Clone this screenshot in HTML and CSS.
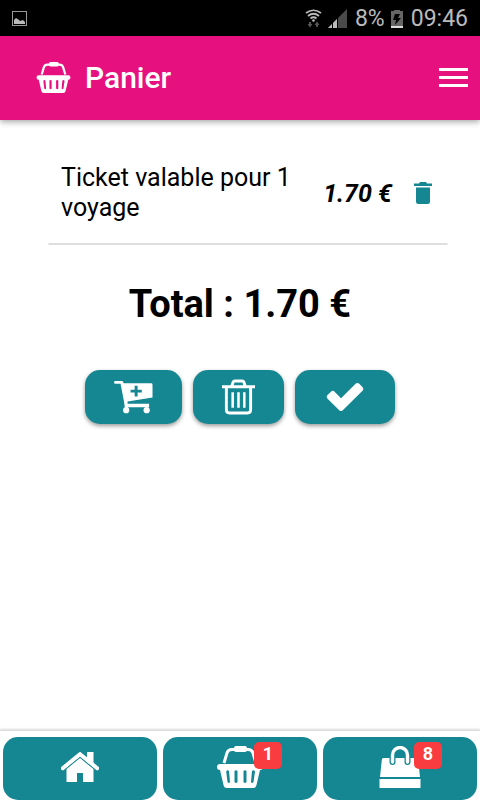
FILE: index.html
```html
<!DOCTYPE html>
<html lang="fr">
  <head>
    <meta charset="UTF-8" />
    <meta name="viewport" content="width=device-width, initial-scale=1.0" />
    <title>Panier</title>
    <link rel="stylesheet" href="styles.css">
  </head>
  <body>
    <svg class="defs" aria-hidden="true">
      <symbol id="basket" viewBox="0 0 46 42">
        <path d="M7 17 L10 7 Q11 3.500 15 3.500 H31 Q35 3.500 36 7 L39 17" fill="none" stroke="currentColor" stroke-width="3" />
        <rect x="17" y="0" width="13" height="6" rx="2" fill="currentColor" />
        <path fill="currentColor" fill-rule="evenodd" d="M3 18 H43 A3 3 0 0 1 43 24 L39.500 39 Q39 42 36 42 H10 Q7 42 6.500 39 L3 24 A3 3 0 0 1 3 18 Z M9.200 25.500 L10.500 36 Q12 38 13 36 L12 25 Q10.500 23.500 9.200 25.500 Z M17.500 25 V36 Q19 38 20.500 36 V25 Q19 23.500 17.500 25 Z M26.500 25 V36 Q28 38 29.500 36 V25 Q28 23.500 26.500 25 Z M35 25 L34 36 Q35 38 36.500 36 L38 25.500 Q36.500 23.500 35 25 Z" />
      </symbol>
    </svg>

    <div class="status-bar">
      <svg class="picture" width="15" height="15" viewBox="0 0 15 15">
        <rect x="0.500" y="0.500" width="14" height="14" fill="none" stroke="#999" />
        <path d="M2 13 V9 L4 7 L7 9 L8 10 L11 9 L13 11 V13 Z" fill="#bbb" />
      </svg>
      <svg width="17" height="20" viewBox="0 0 17 20">
        <g fill="none" stroke="#bbb" stroke-width="1.700">
          <path d="M1 4 Q8.500 -1.500 16 4" />
          <path d="M3 7 Q8.500 2.500 14 7" />
          <path d="M5.500 9.500 Q8.500 7 11.500 9.500" />
        </g>
        <circle cx="8.500" cy="11.500" r="1.300" fill="#bbb" />
        <path d="M5 13 V17 M12 18 V14" stroke="#555" stroke-width="2" />
        <path d="M2.500 15 H7.500 L5 18.500 Z M9.500 16 H14.500 L12 12.500 Z" fill="#555" />
      </svg>
      <svg class="signal" width="19" height="19" viewBox="0 0 19 19">
        <path d="M0 19 L19 0 V19 Z" fill="#4a4a4a" />
        <path d="M0 19 L9 10 V19 Z" fill="#bbb" />
        <path d="M4.500 12 V19 M9.500 8 V19" stroke="#000" />
      </svg>
      <span class="percent">8%</span>
      <svg class="battery" width="12" height="18" viewBox="0 0 12 18">
        <path d="M0 1 H3 V0 H9 V1 H12 V18 H0 Z" fill="#666" />
        <path d="M0 16 H12 V18 H0 Z" fill="#ddd" />
        <path d="M4 4 H9 L7 8 H10 L4 15 L5 10 H2 Z" fill="#000" />
      </svg>
      <span>09:46</span>
    </div>

    <header class="toolbar">
      <svg class="toolbar-icon"><use href="#basket" /></svg>
      <h1>Panier</h1>
      <button class="menu" aria-label="Menu">
        <svg width="29" height="20" viewBox="0 0 29 20">
          <path d="M0 1.500 H29 M0 9.500 H29 M0 17.500 H29" stroke="currentColor" stroke-width="3.200" />
        </svg>
      </button>
    </header>

    <main>
      <ul class="items">
        <li>
          <span class="label">Ticket valable pour 1 voyage</span>
          <span class="price">1.70 €</span>
          <button class="remove" aria-label="Supprimer">
            <svg width="18" height="22" viewBox="0 0 18 22">
              <path fill="currentColor" d="M0 1.500 H5 L6 0 H12 L13 1.500 H18 V4 H0 Z M2 5.500 H16 V19.500 Q16 22 13.500 22 H4.500 Q2 22 2 19.500 Z" />
            </svg>
          </button>
        </li>
      </ul>

      <h2>Total : 1.70 €</h2>

      <div class="actions">
        <button class="add" aria-label="Ajouter">
          <svg width="39" height="34" viewBox="0 0 40 34">
            <path d="M1.500 2 H8 L13 28" fill="none" stroke="currentColor" stroke-width="3" stroke-linecap="round" stroke-linejoin="round" />
            <path fill="currentColor" fill-rule="evenodd" d="M8 3 H38 Q39.500 3 39.500 4.500 V17.500 L14 21.500 L13.500 24 H36 V27.500 H11 V23 Z M21.200 5.500 V9.500 H17 V12.500 H21.200 V16.500 H24.200 V12.500 H28.500 V9.500 H24.200 V5.500 Z" />
            <circle cx="12.500" cy="30.500" r="3.200" fill="currentColor" />
            <circle cx="33.500" cy="30.500" r="3.200" fill="currentColor" />
          </svg>
        </button>
        <button class="clear" aria-label="Vider le panier">
          <svg width="33" height="36" viewBox="0 0 34 36">
            <g fill="none" stroke="currentColor">
              <path d="M0 7.500 H34" stroke-width="3" />
              <path d="M10 7 L11.500 2.500 Q12 1.500 13 1.500 H21 Q22 1.500 22.500 2.500 L24 7 M4.500 8 V31 Q4.500 34.500 7.500 34.500 H26.500 Q29.500 34.500 29.500 31 V8" stroke-width="3" />
              <path d="M11 13 V29 M17 13 V29 M23 13 V29" stroke-width="2.600" />
            </g>
          </svg>
        </button>
        <button class="confirm" aria-label="Valider">
          <svg width="38" height="30" viewBox="0 0 38 30">
            <path fill="currentColor" d="M1.300 13.200 L5.200 9.400 Q6.800 8.200 8.400 9.600 L15 16.200 L29.800 1.600 Q31.400 0.400 33 1.600 L36.800 5.400 Q38 7 36.800 8.600 L16.500 28.400 Q15 29.600 13.500 28.400 L1.300 16.400 Q0 14.800 1.300 13.200 Z" />
          </svg>
        </button>
      </div>
    </main>

    <nav class="tabs">
      <a href="#accueil" aria-label="Accueil">
        <span class="icon">
          <svg width="38" height="30" viewBox="0 0 38 30">
            <path d="M1.800 16.200 L19 2.200 L36.200 16.200" fill="none" stroke="currentColor" stroke-width="4" stroke-linecap="round" />
            <path fill="currentColor" d="M26 0 H32.500 V12 L26 7 Z M5.500 16.500 L19 5.500 L32.500 16.500 V30 H22 V21 H16 V30 H5.500 Z" />
            <path d="M5 17 L19 5.500 L33 17" fill="none" stroke="#148793" stroke-width="1" />
          </svg>
        </span>
      </a>
      <a href="#panier" aria-label="Panier">
        <span class="icon">
          <svg width="46" height="42"><use href="#basket" /></svg>
          <span class="badge">1</span>
        </span>
      </a>
      <a href="#achats" aria-label="Achats">
        <span class="icon">
          <svg width="42" height="42" viewBox="0 0 42 42">
            <path fill="currentColor" d="M4.500 12 H37.500 Q39 12 39.200 14 L41 31 H1 L2.800 14 Q3 12 4.500 12 Z M0.500 33 H41.500 V42 H0.500 Z" />
            <path d="M13.500 16 V9 A7.500 7.500 0 0 1 28.500 9 V16" fill="none" stroke="#148793" stroke-width="6" stroke-linecap="round" />
            <path d="M13.500 16 V9 A7.500 7.500 0 0 1 28.500 9 V16" fill="none" stroke="currentColor" stroke-width="3.400" stroke-linecap="round" />
          </svg>
          <span class="badge">8</span>
        </span>
      </a>
    </nav>
  </body>
</html>
```
FILE: styles.css
```css
* {
  box-sizing: border-box;
}

body {
  display: flex;
  flex-direction: column;
  min-height: 100vh;
  margin: 0;
  font-family: Roboto, sans-serif;
  color: #000;
  background-color: #fff;
}

svg {
  display: block;
  flex: none;
}

button {
  padding: 0;
  border: 0;
  background: none;
  cursor: pointer;
}

.defs {
  position: absolute;
  width: 0;
  height: 0;
}

.status-bar {
  display: flex;
  align-items: center;
  height: 36px;
  padding: 1px 12px 0;
  font-size: 23px;
  color: #bbb;
  background-color: #000;
}

.status-bar .picture {
  margin-right: auto;
}

.signal {
  margin: 0 8px 0 6px;
}

.battery {
  margin: 0 8px 0 6px;
}

.toolbar {
  display: flex;
  align-items: center;
  height: 84px;
  padding: 0 12px 2px 36px;
  color: #fff;
  background-color: #e6107e;
  box-shadow: 0 2px 6px rgba(0, 0, 0, 0.35);
}

.toolbar-icon {
  width: 35px;
  height: 31px;
}

.toolbar h1 {
  flex: 1;
  margin: 0 0 0 14px;
  font-size: 30px;
  font-weight: 500;
}

.menu {
  padding-top: 2px;
  color: #fff;
}

main {
  flex: 1;
  padding: 32px;
}

.items {
  margin: 0 0 0 16px;
  padding: 0;
  list-style: none;
}

.items li {
  display: flex;
  align-items: center;
  padding: 11px 16px 20px 13px;
  border-bottom: 2px solid #dedede;
  border-radius: 2px;
}

.label {
  flex: 1;
  font-size: 25px;
  line-height: 30px;
}

.price {
  margin: 0 22px 0 16px;
  font-size: 25px;
  font-weight: bold;
  font-style: italic;
}

.remove {
  color: #148793;
}

h2 {
  margin: 36px 0 43px;
  font-size: 38px;
  line-height: 46px;
  text-align: center;
}

.actions {
  display: flex;
  justify-content: center;
  gap: 11px;
}

.actions button {
  display: flex;
  align-items: center;
  justify-content: center;
  height: 54px;
  padding: 0 29px;
  color: #fff;
  background-color: #148793;
  border-radius: 15px;
  box-shadow: 0 2px 4px rgba(0, 0, 0, 0.4);
}

.actions .confirm {
  padding: 0 31px;
}

.tabs {
  display: flex;
  gap: 6px;
  padding: 6px 3px 0;
  border-top: 1px solid #ddd;
  box-shadow: 0 -1px 2px rgba(0, 0, 0, 0.15);
}

.tabs a {
  display: flex;
  flex: 1;
  align-items: center;
  justify-content: center;
  height: 63px;
  color: #fff;
  background-color: #148793;
  border-radius: 15px;
}

.icon {
  position: relative;
  margin-bottom: 4px;
}

.badge {
  position: absolute;
  top: -4px;
  left: calc(50% + 14px);
  width: 28px;
  height: 27px;
  font-size: 18px;
  font-weight: bold;
  line-height: 24px;
  text-align: center;
  background-color: #f83c3f;
  border-radius: 5px;
}
```
